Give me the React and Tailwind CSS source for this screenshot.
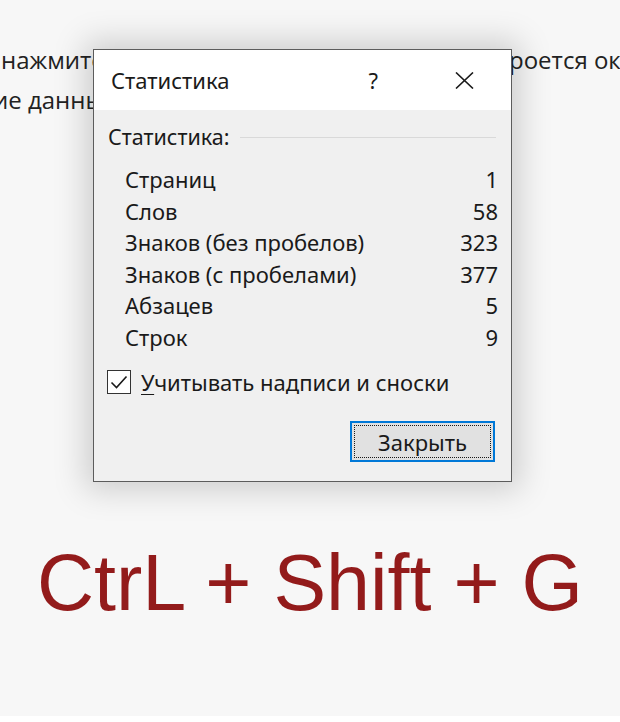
import React from 'react';

const rows = [
  ['Страниц', '1'],
  ['Слов', '58'],
  ['Знаков (без пробелов)', '323'],
  ['Знаков (с пробелами)', '377'],
  ['Абзацев', '5'],
  ['Строк', '9'],
];

const StatsDialog = () => (
  <div className="absolute left-[93px] top-[49px] w-[419px] h-[433px] border border-[#5c5c5c] bg-[#f0f0f0] shadow-[0_0_30px_8px_rgba(0,0,0,0.17)] font-['Noto_Sans',sans-serif] text-[#1a1a1a] flex flex-col">
    {/* Title bar */}
    <div className="h-[60px] bg-white flex items-center pl-[17px] pr-[37px] shrink-0">
      <span className="flex-1 text-[22px] leading-none">Статистика</span>
      <span className="text-[22px] leading-none mr-[77px]">?</span>
      <svg width="19" height="17" viewBox="0 0 19 17" className="text-[#1a1a1a]">
        <path d="M1 0.5 L18 16.5 M18 0.5 L1 16.5" stroke="currentColor" strokeWidth="1.6" fill="none" />
      </svg>
    </div>

    {/* Body */}
    <div className="flex flex-col pt-[16px]">
      <div className="flex items-center pl-[14px] pr-[15px] h-[22px] text-[21.5px] leading-[22px]">
        <span>Статистика:</span>
        <div className="flex-1 h-px bg-[#d9d9d9] ml-[10px]"></div>
      </div>

      <div className="flex flex-col mt-[16px] pl-[31px] pr-[13px]">
        {rows.map(([label, value]) => (
          <div key={label} className="flex justify-between h-[31.5px] text-[22px] leading-[31.5px]">
            <span>{label}</span>
            <span>{value}</span>
          </div>
        ))}
      </div>

      {/* Checkbox */}
      <div className="flex items-center mt-[17px] pl-[13px] h-[24px]">
        <div className="w-[24px] h-[24px] border-[1.5px] border-[#333] bg-white flex items-center justify-center">
          <svg width="18" height="16" viewBox="0 0 18 16">
            <path d="M1.5 8.5 L6.5 13.5 L16.5 2.5" stroke="#1a1a1a" strokeWidth="1.6" fill="none" />
          </svg>
        </div>
        <span className="ml-[10px] text-[22px] leading-none">
          <span className="underline underline-offset-[3px] decoration-1">У</span>читывать надписи и сноски
        </span>
      </div>

      {/* Button */}
      <div className="flex justify-end mt-[27px] pr-[16px]">
        <button className="w-[145px] h-[41px] border-2 border-[#0078d7] bg-[#e1e1e1] p-[2px]">
          <div className="w-full h-full border border-dotted border-[#1a1a1a] flex items-center justify-center text-[22px] leading-none">
            Закрыть
          </div>
        </button>
      </div>
    </div>
  </div>
);

export default function App() {
  return (
    <div className="w-[620px] h-[722px] bg-white overflow-hidden">
      <div className="relative w-[620px] h-[716px] bg-[#f7f7f7] overflow-hidden flex flex-col">
        {/* Article text behind the dialog */}
        <div className="pt-[40px] font-['Open_Sans',sans-serif] text-[24px] leading-[40px] text-[#222] whitespace-nowrap">
          <div className="flex">
            <span className="w-[509px] shrink-0 pl-[1px]">нажмите</span>
            <span>роется окно</span>
          </div>
          <div className="-ml-[7px]">ие данные</div>
        </div>

        {/* Shortcut caption */}
        <div className="mt-[423px] text-center font-['Liberation_Sans',Arial,sans-serif] text-[79px] leading-none text-[#931b1b]">
          CtrL + Shift + G
        </div>

        <StatsDialog />
      </div>
    </div>
  );
}
